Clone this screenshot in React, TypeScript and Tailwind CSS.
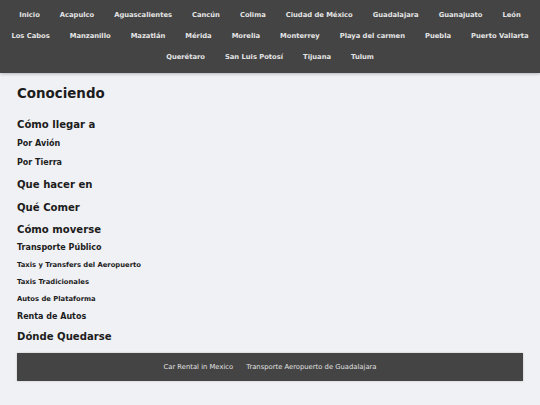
import React from "react";

const navLinks = [
  "Inicio",
  "Acapulco",
  "Aguascalientes",
  "Cancún",
  "Colima",
  "Ciudad de México",
  "Guadalajara",
  "Guanajuato",
  "León",
  "Los Cabos",
  "Manzanillo",
  "Mazatlán",
  "Mérida",
  "Morelia",
  "Monterrey",
  "Playa del carmen",
  "Puebla",
  "Puerto Vallarta",
  "Querétaro",
  "San Luis Potosí",
  "Tijuana",
  "Tulum",
];

type Item = { text: string; cls: string };

// every line is 14px tall; the margins give the page's vertical rhythm
const sections: Item[] = [
  { text: "Conociendo", cls: "mt-[14px] text-[13.4px]" },
  { text: "Cómo llegar a", cls: "mt-[17px] text-[10.1px]" },
  { text: "Por Avión", cls: "mt-[5px] text-[8px]" },
  { text: "Por Tierra", cls: "mt-[4.5px] text-[8px]" },
  { text: "Que hacer en", cls: "mt-[8px] text-[10.1px]" },
  { text: "Qué Comer", cls: "mt-[9px] text-[10.1px]" },
  { text: "Cómo moverse", cls: "mt-[8px] text-[10.1px]" },
  { text: "Transporte Público", cls: "mt-[4px] text-[8px]" },
  { text: "Taxis y Transfers del Aeropuerto", cls: "mt-[3px] text-[6.8px]" },
  { text: "Taxis Tradicionales", cls: "mt-[3px] text-[6.8px]" },
  { text: "Autos de Plataforma", cls: "mt-[3px] text-[6.8px]" },
  { text: "Renta de Autos", cls: "mt-[4px] text-[8px]" },
  { text: "Dónde Quedarse", cls: "mt-[6.5px] text-[10.1px]" },
];

export default function App() {
  return (
    <div
      className="min-h-[405px] bg-[#f0f1f5] text-[#1c1c1c]"
      style={{ fontFamily: '"DejaVu Sans", Verdana, sans-serif' }}
    >
      <header className="bg-[#444444] py-[5px] shadow-[0_1px_3px_rgba(0,0,0,0.25)]">
        <nav className="flex flex-wrap justify-center">
          {navLinks.map((link) => (
            <a
              key={link}
              href="#"
              className="flex h-[21px] items-center px-[10px] text-[6.75px] font-bold leading-none text-[#e4e4e4]"
            >
              {link}
            </a>
          ))}
        </nav>
      </header>

      <main className="px-[17px]">
        {sections.map((s) => (
          <div key={s.text} className={`h-[14px] font-bold leading-[14px] ${s.cls}`}>
            {s.text}
          </div>
        ))}

        <footer className="mt-[9px] flex h-[28px] items-center justify-center gap-[13px] bg-[#444444] text-[6.8px] text-[#e0e0e0] shadow-[0_0_2px_rgba(0,0,0,0.2)]">
          <a href="#">Car Rental in Mexico</a>
          <a href="#">Transporte Aeropuerto de Guadalajara</a>
        </footer>
      </main>
    </div>
  );
}
